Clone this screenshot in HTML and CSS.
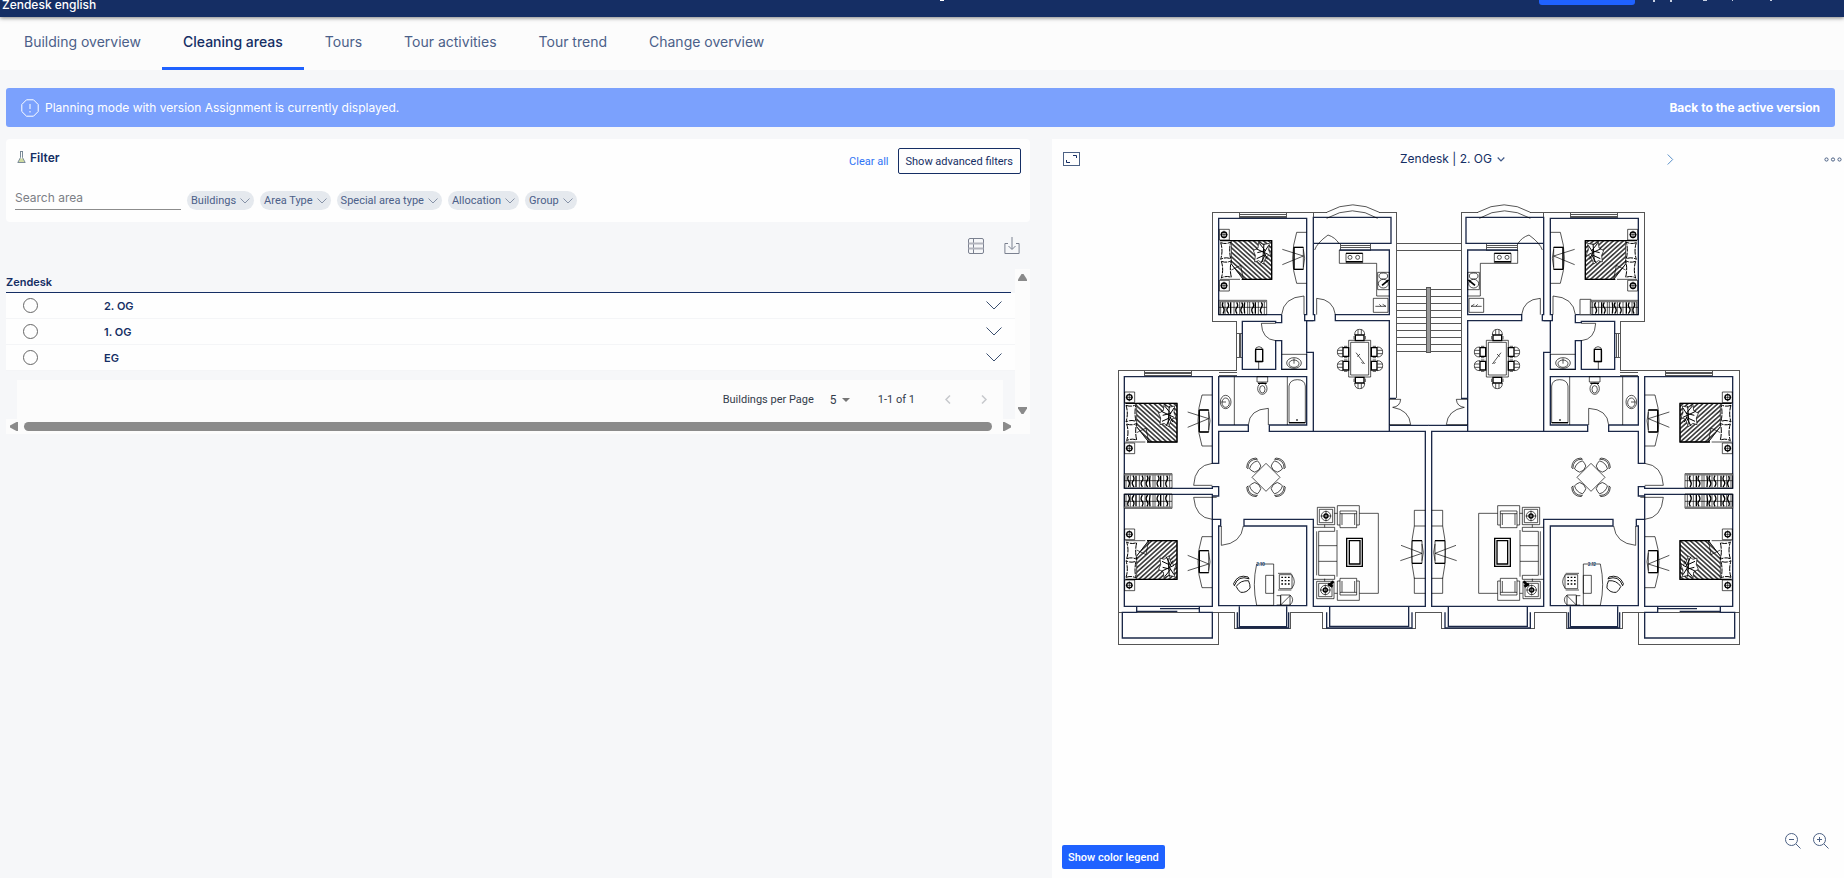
FILE: index.html
```
<!DOCTYPE html>
<html lang="en">
<head>
<meta charset="utf-8">
<title>Cleaning areas</title>
<link rel="stylesheet" href="styles.css">
</head>
<body>
<header class="topbar">
  <span class="topbar-name">Zendesk english</span>
  <svg class="topbar-mark" width="6" height="2" viewBox="0 0 6 2" aria-hidden="true"><path d="M1 0h4v1H1z"/></svg>
  <span class="topbar-action"></span>
  <svg class="topbar-user" width="130" height="3" viewBox="0 0 130 3" aria-hidden="true"><path d="M0 0h2v2H0zM17 0h2v2h-2zM50 0h4v1h-4zM79 0h1v1h-1zM117 0h2v1h-2z"/></svg>
</header>

<nav class="tabs">
  <a class="tab" href="#building">Building overview</a>
  <a class="tab tab-active" href="#cleaning">Cleaning areas</a>
  <a class="tab" href="#tours">Tours</a>
  <a class="tab" href="#activities">Tour activities</a>
  <a class="tab" href="#trend">Tour trend</a>
  <a class="tab" href="#changes">Change overview</a>
</nav>

<div class="banner">
  <svg width="18" height="18" viewBox="0 0 18 18" fill="none" stroke="#fff" aria-hidden="true"><path d="M5.500.8h7l4.700 4.700v7l-4.700 4.700h-7L.8 12.500v-7z"/><path d="M9 5v5M9 12v1.500"/></svg>
  <span class="banner-text">Planning mode with version Assignment is currently displayed.</span>
  <a class="banner-link" href="#active">Back to the active version</a>
</div>

<main class="workspace">
  <section class="left">
    <form class="filter">
      <div class="filter-head">
        <h2 class="filter-title">
          <svg width="9" height="12" viewBox="0 0 9 12" fill="none" aria-hidden="true"><path d="M3 7.500h3l1.500 3.500h-6z" fill="#cfdba0"/><path d="M3 .5h3M3.500 .5v6L.8 11.500h7.400L5.500 6.500v-6" stroke="#6d7f8c" stroke-width=".9"/></svg>
          Filter
        </h2>
        <button class="link-button" type="button">Clear all</button>
        <button class="outline-button" type="button">Show advanced filters</button>
      </div>
      <div class="filter-row">
        <input class="search" type="text" placeholder="Search area" aria-label="Search area">
        <button class="pill" type="button">Buildings<svg class="pill-icon" viewBox="0 0 10 6"><path d="M.5.5 5 5 9.500.5"/></svg></button>
        <button class="pill" type="button">Area Type<svg class="pill-icon" viewBox="0 0 10 6"><path d="M.5.5 5 5 9.500.5"/></svg></button>
        <button class="pill" type="button">Special area type<svg class="pill-icon" viewBox="0 0 10 6"><path d="M.5.5 5 5 9.500.5"/></svg></button>
        <button class="pill" type="button">Allocation<svg class="pill-icon" viewBox="0 0 10 6"><path d="M.5.5 5 5 9.500.5"/></svg></button>
        <button class="pill" type="button">Group<svg class="pill-icon" viewBox="0 0 10 6"><path d="M.5.5 5 5 9.500.5"/></svg></button>
      </div>
    </form>

    <div class="tools">
      <button class="icon-button" type="button" aria-label="Table view"><svg width="16" height="16" viewBox="0 0 16 16" fill="none" stroke="#7b8190"><rect x=".5" y=".5" width="15" height="15" rx="1.500"/><path d="M5.500.5v15"/><path d="M.5 5.500h15M.5 10.500h15" stroke="#b3b5be" stroke-width="2"/></svg></button>
      <button class="icon-button" type="button" aria-label="Download"><svg width="16" height="17" viewBox="0 0 16 17" fill="none" stroke="#7b8190"><path d="M4 6.500H.9v10h14.200v-10H12M8 0v12M4.500 9 8 12.500 11.500 9"/></svg></button>
    </div>

    <div class="list">
      <div class="list-body">
        <h3 class="list-title">Zendesk</h3>
        <div class="floor">
          <input class="radio" type="radio" name="floor" id="f2"><label class="floor-name" for="f2">2. OG</label>
          <button class="icon-button" type="button" aria-label="Expand 2. OG"><svg width="16" height="9" viewBox="0 0 16 9" fill="none" stroke="#3c5070"><path d="M.5.5 8 8 15.500.5"/></svg></button>
        </div>
        <div class="floor">
          <input class="radio" type="radio" name="floor" id="f1"><label class="floor-name" for="f1">1. OG</label>
          <button class="icon-button" type="button" aria-label="Expand 1. OG"><svg width="16" height="9" viewBox="0 0 16 9" fill="none" stroke="#3c5070"><path d="M.5.5 8 8 15.500.5"/></svg></button>
        </div>
        <div class="floor">
          <input class="radio" type="radio" name="floor" id="f0"><label class="floor-name" for="f0">EG</label>
          <button class="icon-button" type="button" aria-label="Expand EG"><svg width="16" height="9" viewBox="0 0 16 9" fill="none" stroke="#3c5070"><path d="M.5.5 8 8 15.500.5"/></svg></button>
        </div>
        <div class="pager">
          <label for="size">Buildings per Page</label>
          <span class="size"><select class="size-select" id="size"><option>5</option></select><svg width="8" height="4" viewBox="0 0 8 4"><path d="M0 0h8L4 4z" fill="#757575"/></svg></span>
          <span class="range">1-1 of 1</span>
          <button class="icon-button" type="button" aria-label="Previous page"><svg width="6" height="9" viewBox="0 0 6 9" fill="none" stroke="#c6c8cc" stroke-width="1.500"><path d="M5 .5 1 4.500l4 4"/></svg></button>
          <button class="icon-button" type="button" aria-label="Next page"><svg width="6" height="9" viewBox="0 0 6 9" fill="none" stroke="#c6c8cc" stroke-width="1.500"><path d="m1 .5 4 4-4 4"/></svg></button>
        </div>
      </div>
      <div class="vscroll">
        <svg width="9" height="7" viewBox="0 0 9 7"><path d="M3.500 0h2L9 5.500V7H0V5.500z" fill="#8b8b8b"/></svg>
        <svg width="9" height="7" viewBox="0 0 9 7"><path d="M0 0h9v1.500L5.500 7h-2L0 1.500z" fill="#8b8b8b"/></svg>
      </div>
      <div class="hscroll">
        <svg width="8" height="9" viewBox="0 0 8 9"><path d="M8 0v9H6.500L0 5.500v-2L6.500 0z" fill="#8b8b8b"/></svg>
        <div class="hthumb"></div>
        <svg width="8" height="9" viewBox="0 0 8 9"><path d="M0 0v9h1.500L8 5.500v-2L1.500 0z" fill="#8b8b8b"/></svg>
      </div>
    </div>
  </section>

  <section class="viewer">
    <div class="viewer-head">
      <button class="icon-button viewer-expand" type="button" aria-label="Full screen"><svg width="17" height="14" viewBox="0 0 17 14" fill="none" stroke="#4c6184"><rect x=".5" y=".5" width="16" height="13"/><path d="M10 3.500h3.500V6M3.500 8v2.500H7" stroke="#152e64"/></svg></button>
      <button class="viewer-title" type="button">Zendesk | 2. OG<svg width="8" height="5" viewBox="0 0 8 5" fill="none" stroke="#3f5887" stroke-width="1.200"><path d="M.7.5 4 4 7.300.5"/></svg></button>
      <div class="viewer-side">
        <button class="icon-button" type="button" aria-label="Next floor"><svg width="7" height="11" viewBox="0 0 7 11" fill="none" stroke="#5b90c8"><path d="m.7.5 5 5-5 5"/></svg></button>
        <button class="icon-button" type="button" aria-label="More"><svg width="18" height="5" viewBox="0 0 18 5" fill="none" stroke="#4c6184"><circle cx="2.500" cy="2.500" r="1.600"/><circle cx="9" cy="2.500" r="1.600"/><circle cx="15.500" cy="2.500" r="1.600"/></svg></button>
      </div>
    </div>

    <svg class="plan" viewBox="45 36 1881 1344" role="img" aria-label="Floor plan">
      <defs>
        <pattern id="hatch" width="10" height="10" patternUnits="userSpaceOnUse" patternTransform="rotate(-48)"><path d="M5 0v10" stroke="#111" stroke-width="4"/></pattern>
        <g id="stand"><path d="M0 0h30v32H0z"/><circle cx="14" cy="16" r="8" stroke-width="4"/><path d="M14 4v24M3 16h22"/></g>
        <g id="bedset">
          <use href="#stand" x="358" y="118"/><use href="#stand" x="358" y="271"/>
          <path d="M394 152h121v116h-85l-36-46z" fill="url(#hatch)"/>
          <path d="M394 222l36 46M394 240l28-14 8 42M360 268h60"/>
          <path d="M360 152h155v116h-90" stroke-width="4"/>
          <path d="M362 158q16 6 30-2q-6 24 0 50q-16-6-30 2q8-26 0-50M364 214q16 6 30-2q-6 24 0 50q-16-6-30 2q8-26 0-50" stroke-width="3" stroke-dasharray="18 3"/>
          <path d="M476 156l14 8 18-4-2 20 6 14-14 6-8 22-14-10-12 4 2-20-6-14 14-8z" fill="#fdfdfd"/>
          <path d="M478 160l18 22-24 6M506 166l-14 22 10 20M470 206l26-12-14 26M492 160l-4 56M468 176l38 18" stroke-width="3"/>
          <path d="M620 127H590Q566 204 590 280h30"/>
          <path d="M582 172h28v66h-28zM610 178q8 26 0 54M547 178l63 20-63 26"/>
          <path d="M582 172h28M582 238h28M582 172v66" stroke-width="4"/>
        </g>
        <g id="wardrobe">
          <path d="M0 0h143v43H0zM0 21h143" />
          <path d="M0 3h143" stroke="#777" stroke-width="5"/>
          <path d="M5 5v36M18 5v36M45 5v36M62 5v36M86 5v36M92 5v36M118 5v36M136 5v36"/>
          <path d="M12 6q-4 10 1 16t-1 18M26 6q6 10 0 16t3 18M35 6v34M53 6q6 10 0 16t1 18M68 6q6 8 0 16t2 18M77 6q-3 18 0 34M101 6q6 10 0 16t1 18M109 6v34M127 6q6 8 0 16t1 18" stroke-width="4"/>
        </g>
        <g id="diner"><path d="M-13 9h26v17h-26z" stroke-width="4"/><path d="M-15 9q0-17 15-17t15 17M-5-7V8M5-7V8M-17 12v10M17 12v10"/></g>
        <g id="chair"><path d="M-13 16q-4-8-4-18 17-10 34 0 0 10-4 18-13 8-26 0zM-20-6q20-20 40 0M-20-11q20-18 40 0M-20-11v6M20-11v6"/></g>
        <g id="armchair"><path d="M0 0h66v58h-8V16H8v42H0zM8 24h50M8 58v8h50v-8M14 24v34M52 24v34"/></g>
        <g id="lamp"><path d="M0 0h52v52H0zM6 6h40v40H6z"/><circle cx="26" cy="26" r="14"/><circle cx="26" cy="26" r="6" stroke-width="4"/><path d="M26 10v32M10 26h32"/></g>

        <g id="flat">
          <g class="plan-outer" shape-rendering="crispEdges">
            <path d="M54 540H410V394H337V67H680M838 67H888V625M888 160H986M888 181H986M640 67V85M54 540V1363H355V1267M54 1267H404M572 1267H668M947 1267H986"/>
            <path d="M418 67h142v16H418zM418 73h142M418 78h142M133 540h142v16H133zM133 546h142M133 551h142M356 548h54M356 555h54M410 430h17v72h-17zM417 430v72M422 430v72M720 160h92v20h-92zM720 167h92M720 173h92"/>
            <path d="M404 1267v49h168v-49M668 1267v49h279v-49"/>
            <path d="M888 298h91M888 319h91M888 340h91M888 361h91M888 381h91M888 401h91M888 421h91M888 442h91M888 463h91M888 484h91"/>
            <path d="M981 293h10v195h-10z" fill="#999"/>
          </g>
          <g class="plan-wall">
            <path d="M545 374H356V85H620V374H614V392H640"/>
            <path d="M640 82H873V160H640zM640 160V374H644V392H620V487H640V724M718 180H868V374H706V392H868V724M888 625H868M868 706H986"/>
            <path d="M545 374V398H527V394H427V538H527V452H545V538H620V490"/>
            <path d="M445 705H356V560H620V705H508V724H976V1249H640V988H432V1008H620V1247H356V1008H362V988H337V913H73V1249H337V988M445 705V724H356V820H337V560H73V895H337V888M337 890H356V918H337"/>
            <path d="M110 1249V1267H67V1344H337V1267H298V1249"/>
            <path d="M418 1249V1310H560V1249M412 1267V1314H566V1267M689 1249V1309H926V1249M680 1267V1314H936V1267"/>
            <path d="M180 1256H298M110 1264H232"/>
          </g>
          <g class="plan-item">
            <path d="M680 67Q758 22 838 67M680 85Q758 40 833 85M644 180Q650 160 684 135Q706 142 718 162"/>
            <path d="M545 374Q550 322 612 318V374M650 374V325Q700 328 706 374M527 400H484Q486 448 527 452M445 705Q448 658 505 655V705M337 820Q284 826 281 886H337M350 922H281Q286 984 337 988M364 1008V1066Q424 1060 430 1008M868 628H902Q900 650 878 652Q928 660 932 704H868"/>
            <path d="M718 180V220H830V318H868M738 190h50v28h-50z"/><circle cx="750" cy="202" r="6"/><circle cx="773" cy="202" r="6"/>
            <path d="M738 190h50M738 215h50" stroke-width="4"/>
            <path d="M833 247h35v52h-35z"/><ellipse cx="850" cy="258" rx="13" ry="9"/><ellipse cx="850" cy="281" rx="15" ry="13"/><path d="M846 286l20-16" stroke-width="5"/>
            <path d="M820 325h44v42h-44zM826 349h18l-6-6M844 349h14l-10-6"/>
            <path d="M466 516v-34q0-12 11-12t11 12v34zM476 516v22" /><path d="M467 478h21v36h-21z" stroke-width="4"/>
            <path d="M545 493h75M545 538h75"/><ellipse cx="582" cy="519" rx="22" ry="16"/><ellipse cx="582" cy="521" rx="15" ry="11"/><path d="M582 505v16"/>
            <path d="M403 560V705M562 560V705M567 698V588Q570 569 592 569T616 588V698z"/><path d="M567 698h49" stroke-width="4"/><circle cx="591" cy="690" r="2"/>
            <ellipse cx="377" cy="636" rx="16" ry="20"/><ellipse cx="377" cy="638" rx="11" ry="14"/><path d="M364 636h14"/>
            <path d="M471 560h32v16h-32z"/><ellipse cx="487" cy="596" rx="14" ry="17"/><ellipse cx="487" cy="598" rx="8" ry="11"/><path d="M474 580h26" stroke-width="4"/>
            <path d="M746 451h66v110h-66zM752 457h54v98h-54zM768 488l26 34M772 500l8-8M784 516l6 6" />
            <use href="#diner" transform="translate(779 426)"/><use href="#diner" transform="translate(779 588) rotate(180)"/>
            <use href="#diner" transform="translate(720 486) rotate(-90)"/><use href="#diner" transform="translate(720 527) rotate(-90)"/>
            <use href="#diner" transform="translate(840 486) rotate(90)"/><use href="#diner" transform="translate(840 527) rotate(90)"/>
            <use href="#bedset"/><use href="#bedset" transform="translate(-284 488)"/><use href="#bedset" transform="translate(-284 1320) scale(1 -1)"/>
            <use href="#wardrobe" x="357" y="331"/><use href="#wardrobe" x="73" y="851"/><use href="#wardrobe" transform="translate(73 955) scale(1 -1)"/>
            <path d="M498 820l42 42-42 42-42-42z"/>
            <use href="#chair" transform="translate(462 826) rotate(-45)"/><use href="#chair" transform="translate(534 826) rotate(45)"/>
            <use href="#chair" transform="translate(462 898) rotate(-135)"/><use href="#chair" transform="translate(534 898) rotate(135)"/>
            <use href="#chair" transform="translate(428 1183) rotate(-25) scale(1.200)"/>
            <path d="M470 1122H521V1246H470Q456 1184 470 1122zM497 1156h24v54h-24z"/>
            <path d="M538 1154h38v42h-38zM534 1150h40M534 1200h40M576 1156q14 20 0 38"/><path d="M544 1162h28M544 1172h28M544 1182h28" stroke-width="4" stroke-dasharray="5 5"/>
            <path d="M530 1217h12v28h-12M542 1215h28v30h-28zM542 1245l28-28M570 1215q16 14 0 30"/>
            <path d="M778 970h57v240h-57M703 970h9M703 1210h9"/>
            <use href="#armchair" transform="translate(712 947)"/><use href="#armchair" transform="translate(712 1231) scale(1 -1)"/>
            <use href="#lamp" x="652" y="952"/><use href="#lamp" x="650" y="1174"/>
            <path d="M688 1186l12-12M684 1182l14 8M692 1178l2 10" stroke-width="8"/>
            <path d="M640 1012h64v12h-48v132h48v12h-64M711 1020v140M656 1067h55M656 1114h55M650 1024v132M674 1004v8M674 1166v8"/>
            <path d="M740 1045h47v84h-47zM748 1052h32v70h-32z" stroke-width="4"/>
            <path d="M976 961H943V1008M943 1163V1210H976M943 1008h33M943 1165h33M943 1008Q926 1086 943 1165M936 1052h30v68h-30zM966 1062q8 26 0 50M903 1066l63 24-65 22"/>
            <path d="M936 1052h30M936 1120h30" stroke-width="4"/>
          </g>
        </g>
      </defs>
      <use href="#flat"/>
      <use href="#flat" transform="translate(1971 0) scale(-1 1)"/>
      <path class="plan-outer" d="M1440 328h33v46h-33z"/>
      <text class="plan-label" x="469" y="1128">2.10</text>
      <text class="plan-label" x="1463" y="1128">2.12</text>
    </svg>

    <div class="viewer-foot">
      <button class="solid-button" type="button">Show color legend</button>
      <div class="zoom">
        <button class="icon-button" type="button" aria-label="Zoom out"><svg width="16" height="16" viewBox="0 0 16 16" fill="none" stroke="#4c6184"><circle cx="6.500" cy="6.500" r="6"/><path d="m11 11 4.500 4.500M4 6.500h5"/></svg></button>
        <button class="icon-button" type="button" aria-label="Zoom in"><svg width="16" height="16" viewBox="0 0 16 16" fill="none" stroke="#4c6184"><circle cx="6.500" cy="6.500" r="6"/><path d="m11 11 4.500 4.500M4 6.500h5M6.500 4v5"/></svg></button>
      </div>
    </div>
  </section>
</main>
</body>
</html>
```

FILE: styles.css
```
* { box-sizing: border-box; }
body {
  margin: 0;
  min-height: 100vh;
  display: flex;
  flex-direction: column;
  background: #f6f7f9;
  color: #152e64;
  font-family: Inter, "Liberation Sans", sans-serif;
  font-size: 12px;
}
button, input, select {
  font: inherit;
  color: inherit;
  margin: 0;
  padding: 0;
  border: 0;
  background: none;
}
a { text-decoration: none; color: inherit; }
svg { display: block; flex: none; }

.topbar {
  height: 17px;
  padding-left: 2px;
  display: flex;
  align-items: flex-start;
  background: #152e64;
  color: #fff;
  box-shadow: 0 1px 4px rgba(0, 0, 0, .5);
  position: relative;
}
.topbar-name {
  flex: 1;
  font-size: 12px;
  font-weight: 500;
  line-height: 16px;
  margin-top: -3px;
}
.topbar-mark { fill: #fff; margin-right: 594px; }
.topbar-action {
  width: 96px;
  height: 5px;
  margin-right: 18px;
  border-radius: 0 0 3px 3px;
  background: #1f62ff;
}
.topbar-user { fill: #c8d0e2; margin-right: 61px; }

.tabs {
  display: flex;
  padding-left: 3px;
  background: #fcfcfc;
}
.tab {
  padding: 13px 21px 14px;
  border-bottom: 3px solid transparent;
  font-size: 14px;
  line-height: 23px;
  color: #4b6089;
}
.tab-active { color: #152e64; font-weight: 500; border-color: #1f62ff; }

.banner {
  display: flex;
  align-items: center;
  gap: 6px;
  min-height: 39px;
  margin: 18px 9px 12px 6px;
  padding: 0 15px;
  border-radius: 3px;
  background: #7ba1fd;
  color: #fff;
}
.banner-text { flex: 1; }
.banner-link { font-weight: 700; }

.workspace {
  flex: 1;
  display: grid;
  grid-template-columns: minmax(0, 1024fr) minmax(0, 792fr);
  gap: 22px;
  padding-left: 6px;
}

.filter {
  padding: 9px 9px 12px;
  border-radius: 4px;
  background: #fefefe;
}
.filter-head { display: flex; align-items: center; gap: 9px; }
.filter-title {
  flex: 1;
  display: flex;
  align-items: center;
  gap: 4px;
  margin: 0 0 8px 2px;
  font-size: 12px;
  font-weight: 600;
}
.link-button,
.outline-button,
.pill,
.pager,
.solid-button {
  font-family: Roboto, Inter, sans-serif;
  font-size: 11px;
}
.link-button { color: #2f74f5; }
.outline-button {
  height: 26px;
  padding: 0 7px;
  border: 1px solid #152e64;
  border-radius: 2px;
}
.filter-row {
  display: flex;
  align-items: flex-end;
  gap: 6px;
  margin-top: 9px;
}
.search {
  width: 166px;
  height: 27px;
  padding-top: 2px;
  border-bottom: 1px solid #8c8c8c;
}
.search::placeholder { color: #7c7f86; opacity: 1; }
.pill {
  display: flex;
  align-items: center;
  gap: 4px;
  height: 19px;
  padding: 0 4px;
  border-radius: 10px;
  background: #e5e9ee;
  color: #4b6089;
}
.pill-icon { width: 10px; height: 6px; fill: none; stroke: #8793a8; }

.tools {
  display: flex;
  justify-content: flex-end;
  gap: 20px;
  padding: 15px 10px 15px;
}

.list {
  display: grid;
  grid-template-columns: minmax(0, 1fr) 15px;
}
.list-title {
  margin: 0 4px 0 0;
  padding: 6px 0 2px;
  border-bottom: 1px solid #152e64;
  font-size: 11px;
  line-height: 15px;
  font-weight: 600;
}
.floor {
  display: flex;
  align-items: center;
  height: 26px;
  padding: 0 13px 0 17px;
  background: #fefefe;
  border-bottom: 1px solid #f4f5f7;
}
.floor-name {
  flex: 1;
  padding-left: 66px;
  font-size: 11px;
  font-weight: 600;
}
.radio {
  appearance: none;
  width: 15px;
  height: 15px;
  border: 1px solid #666;
  border-radius: 50%;
}
.pager {
  display: flex;
  align-items: center;
  justify-content: flex-end;
  height: 39px;
  margin: 9px 12px 0 11px;
  padding-right: 16px;
  background: #fcfcfc;
  color: #333b4a;
}
.size { display: flex; align-items: center; gap: 4px; margin-left: 16px; }
.size-select { appearance: none; width: 8px; font-size: 12px; }
.range { margin: 0 30px 0 28px; }
.pager .icon-button + .icon-button { margin-left: 30px; }
.vscroll {
  display: flex;
  flex-direction: column;
  align-items: center;
  justify-content: space-between;
  padding: 5px 0;
  background: #fcfcfc;
}
.hscroll {
  grid-column: 1 / 3;
  display: flex;
  align-items: center;
  padding: 3px 19px 3px 4px;
  background: #fcfcfc;
}
.hthumb {
  flex: 1;
  height: 9px;
  margin: 0 11px 0 6px;
  border-radius: 5px;
  background: #8b8b8b;
}

.viewer {
  display: flex;
  flex-direction: column;
  background: #fefefe;
}
.viewer-head {
  display: grid;
  grid-template-columns: 1fr auto 1fr;
  align-items: center;
  padding: 9px 2px 0 11px;
}
.viewer-expand { justify-self: start; }
.viewer-title { display: flex; align-items: center; gap: 5px; line-height: 22px; }
.viewer-side {
  display: flex;
  justify-content: space-between;
  align-items: center;
  padding-left: 162px;
}
.plan {
  width: 627px;
  max-width: 100%;
  height: auto;
  margin: 32px 0 0 63px;
  fill: none;
  stroke-width: 3;
}
.plan-outer { stroke: #555; fill: none; }
.plan-wall { stroke: #1b2848; fill: none; stroke-width: 4; }
.plan-item { stroke: #000; fill: none; stroke-width: 2; }
.plan-label {
  font-size: 13px;
  font-weight: 700;
  fill: #14406e;
}
.viewer-foot {
  flex: 1;
  display: flex;
  align-items: flex-end;
  justify-content: space-between;
  padding: 0 15px 9px 10px;
}
.solid-button {
  height: 24px;
  padding: 0 6px;
  border-radius: 2px;
  background: #1f62ff;
  color: #fff;
  font-weight: 500;
}
.zoom { display: flex; gap: 12px; margin-bottom: 20px; }
```
